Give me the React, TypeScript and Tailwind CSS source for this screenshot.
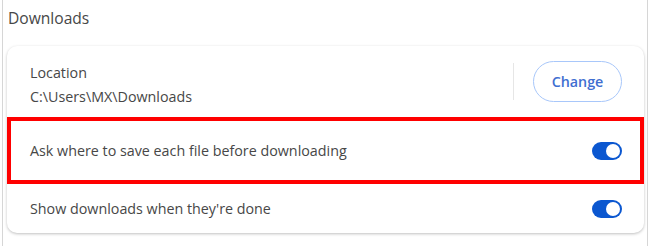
import React, { useState } from 'react';

function Toggle({ on, onChange }: { on: boolean; onChange: () => void }) {
  return (
    <button
      type="button"
      onClick={onChange}
      className={`relative flex h-[18px] w-[30px] shrink-0 items-center rounded-full ${
        on ? 'bg-[#0b57d0]' : 'bg-[#c4c7c5]'
      }`}
    >
      <span
        className={`absolute top-[2px] h-[14px] w-[14px] rounded-full bg-white ${
          on ? 'right-[2px]' : 'left-[2px]'
        }`}
      />
    </button>
  );
}

export default function App() {
  const [askWhere, setAskWhere] = useState(true);
  const [showDone, setShowDone] = useState(true);

  return (
    <div className="h-[246px] w-[650px] bg-white px-[2px] font-['Open_Sans',sans-serif] text-[#474747]">
      <div className="h-full border-x border-[#d6d6d6] pr-[3px] pl-[4px]">
        <h2 className="pt-[7px] pl-[1px] text-[15.6px] leading-[22px]">Downloads</h2>

        <div className="mt-[17px] overflow-hidden rounded-[10px] bg-white shadow-[0_1px_3px_rgba(0,0,0,0.25)]">
          {/* Location */}
          <div className="flex h-[71px] items-center pr-[22px] pl-[23px]">
            <div className="flex-1 pt-[6px]">
              <div className="text-[14.3px] leading-[24px]">Location</div>
              <div className="text-[14.3px] leading-[24px]">C:\Users\MX\Downloads</div>
            </div>
            <div className="h-[37px] w-px bg-[#e6e6e6]" />
            <button
              type="button"
              className="ml-[19px] h-[41px] w-[89px] rounded-full border border-[#a8c7fa] text-[14.3px] font-semibold text-[#3f6fd1]"
            >
              Change
            </button>
          </div>

          {/* Ask where - highlighted */}
          <div className="flex h-[67px] items-center justify-between border-4 border-[#ff0000] pr-[18px] pl-[19px]">
            <span className="text-[14.3px]">Ask where to save each file before downloading</span>
            <Toggle on={askWhere} onChange={() => setAskWhere(!askWhere)} />
          </div>

          {/* Show downloads */}
          <div className="flex h-[49px] items-center justify-between pr-[22px] pl-[23px]">
            <span className="text-[14.3px]">Show downloads when they're done</span>
            <Toggle on={showDone} onChange={() => setShowDone(!showDone)} />
          </div>
        </div>
      </div>
    </div>
  );
}
